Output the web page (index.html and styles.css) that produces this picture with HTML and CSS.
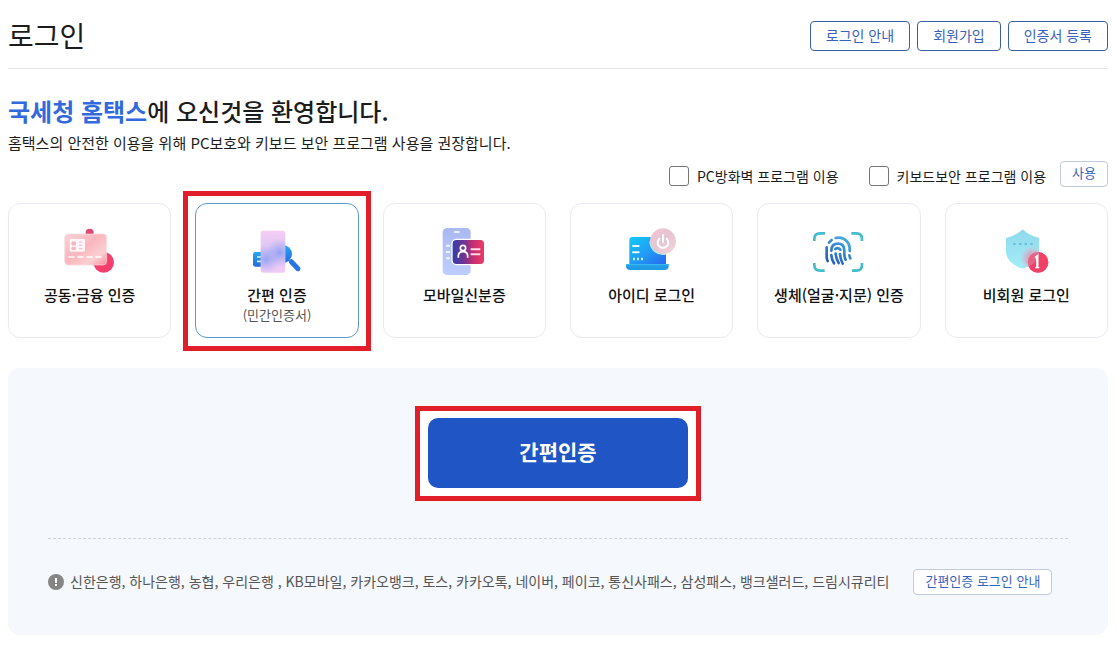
FILE: index.html
```html
<!doctype html>
<html lang="ko">
<head>
    <meta charset="utf-8">
    <meta content="width=device-width,initial-scale=1" name="viewport">
    <title>로그인</title>
    <link rel="stylesheet" href="styles.css">
</head>
<body>
<header class="top">
    <h1>로그인</h1>
    <div class="top-btns">
        <button type="button" class="btn">로그인 안내</button>
        <button type="button" class="btn">회원가입</button>
        <button type="button" class="btn">인증서 등록</button>
    </div>
</header>
<main>
    <h2><strong>국세청 홈택스</strong>에 오신것을 환영합니다.</h2>
    <p class="desc">홈택스의 안전한 이용을 위해 PC보호와 키보드 보안 프로그램 사용을 권장합니다.</p>

    <form class="security">
        <label for="firewall"><input type="checkbox" id="firewall">PC방화벽 프로그램 이용</label>
        <label for="keyboard"><input type="checkbox" id="keyboard">키보드보안 프로그램 이용</label>
        <button type="button" class="btn small">사용</button>
    </form>

    <div class="cards">
        <button type="button" class="card">
            <svg class="icon" viewBox="0 0 240 180" aria-hidden="true">
                <defs>
                    <linearGradient id="cardPink" x1="0" y1="0" x2="1" y2="1">
                        <stop offset="0" stop-color="#fbd3d8"/>
                        <stop offset=".45" stop-color="#f9b6bd"/>
                        <stop offset=".75" stop-color="#fbd0d3"/>
                        <stop offset="1" stop-color="#f58c9c"/>
                    </linearGradient>
                </defs>
                <circle cx="119" cy="38" r="12" fill="#dc4a74"/>
                <circle cx="161" cy="127" r="31" fill="#f43f6c"/>
                <rect x="44" y="42" width="126" height="93" rx="11" fill="url(#cardPink)" stroke="#fbdadd" stroke-width="2"/>
                <rect x="59" y="57" width="46" height="38" rx="4" fill="#fff" opacity=".85"/>
                <path d="M66 66h10v9H66zM66 82h10v6H66zM87 66h10M87 76h10M87 86h10" fill="#f7b6bf" stroke="#f7b6bf" stroke-width="3"/>
                <path d="M57 111h15M84 111h15M111 111h15M138 111h15" stroke="#fff" stroke-width="5" stroke-linecap="round"/>
            </svg>
            <span class="name">공동·금융 인증</span>
        </button>
        <button type="button" class="card on">
            <svg class="icon" viewBox="-9 0 240 180" aria-hidden="true">
                <defs>
                    <linearGradient id="blueLens" x1="0" y1="0" x2="0" y2="1">
                        <stop offset="0" stop-color="#26a9f1"/>
                        <stop offset="1" stop-color="#2569df"/>
                    </linearGradient>
                    <linearGradient id="phonePink" x1="0" y1="0" x2="0" y2="1">
                        <stop offset="0" stop-color="#f6cdf3"/>
                        <stop offset=".5" stop-color="#d8c4f5"/>
                        <stop offset="1" stop-color="#f1ccf4"/>
                    </linearGradient>
                    <radialGradient id="phoneGlow">
                        <stop offset="0" stop-color="#7c97f3" stop-opacity=".75"/>
                        <stop offset="1" stop-color="#9ba5f5" stop-opacity="0"/>
                    </radialGradient>
                    <clipPath id="phoneClip"><rect x="62" y="32" width="74" height="126" rx="8"/></clipPath>
                </defs>
                <rect x="39" y="96" width="48" height="44" rx="7" fill="url(#blueLens)"/>
                <path d="M51 111h15M51 124h15" stroke="#dff2ff" stroke-width="5"/>
                <circle cx="129" cy="102" r="27" fill="url(#blueLens)"/>
                <path d="M154 125l20 21" stroke="#2674e5" stroke-width="15" stroke-linecap="round"/>
                <rect x="62" y="32" width="74" height="126" rx="8" fill="url(#phonePink)"/>
                <g clip-path="url(#phoneClip)">
                    <circle cx="119" cy="98" r="42" fill="url(#phoneGlow)"/>
                    <circle cx="78" cy="118" r="42" fill="url(#phoneGlow)"/>
                </g>
            </svg>
            <span class="name">간편 인증</span>
            <span class="sub">(민간인증서)</span>
        </button>
        <button type="button" class="card">
            <svg class="icon" viewBox="-2 0 240 180" aria-hidden="true">
                <defs>
                    <linearGradient id="idCard" x1="0" y1="0" x2="1" y2="0">
                        <stop offset="0" stop-color="#2e3fae"/>
                        <stop offset=".4" stop-color="#77338f"/>
                        <stop offset=".65" stop-color="#c72f72"/>
                        <stop offset="1" stop-color="#ee3a64"/>
                    </linearGradient>
                    <linearGradient id="idPhone" x1="0" y1="0" x2="0" y2="1">
                        <stop offset="0" stop-color="#a9b9f1"/>
                        <stop offset="1" stop-color="#bfceff"/>
                    </linearGradient>
                </defs>
                <rect x="54" y="24" width="84" height="141" rx="13" fill="url(#idPhone)"/>
                <path d="M90 36h13" stroke="#fff" stroke-width="5" stroke-linecap="round"/>
                <path d="M64 77h12M64 96h12M64 115h12" stroke="#eef2ff" stroke-width="6"/>
                <rect x="82" y="58" width="98" height="76" rx="13" fill="url(#idCard)" stroke="#fff" stroke-width="4"/>
                <circle cx="115" cy="84" r="8" fill="none" stroke="#fff" stroke-width="5"/>
                <path d="M101 113v-5q0-13 14-13t14 13v5" fill="none" stroke="#fff" stroke-width="5"/>
                <path d="M138 88h29M138 103h29" stroke="#ffdce6" stroke-width="6"/>
            </svg>
            <span class="name">모바일신분증</span>
        </button>
        <button type="button" class="card">
            <svg class="icon" viewBox="7 0 240 180" aria-hidden="true">
                <defs>
                    <linearGradient id="laptop" x1="0" y1="0" x2="1" y2="1">
                        <stop offset="0" stop-color="#12caf7"/>
                        <stop offset=".55" stop-color="#2299f5"/>
                        <stop offset="1" stop-color="#2867ee"/>
                    </linearGradient>
                    <linearGradient id="power" x1="0" y1="0" x2="1" y2="1">
                        <stop offset="0" stop-color="#f6c6cf"/>
                        <stop offset=".5" stop-color="#e6c4d3"/>
                        <stop offset="1" stop-color="#fad8da"/>
                    </linearGradient>
                </defs>
                <path d="M59 132V60q0-9 9-9h92q9 0 9 9v72z" fill="url(#laptop)"/>
                <path d="M49 132h128v5q0 13-13 13H62q-13 0-13-13z" fill="#229be5"/>
                <path d="M49 134h128" stroke="#38b9f1" stroke-width="4"/>
                <path d="M70 78h17M70 97h17" stroke="#e8fbff" stroke-width="6" stroke-linecap="round"/>
                <path d="M70 117h6M82 117h6M94 117h6" stroke="#c5efff" stroke-width="7"/>
                <circle cx="160" cy="64" r="39" fill="url(#power)"/>
                <path d="M121 64a39 39 0 0 0 47 38" fill="none" stroke="#b9e6fb" stroke-width="4"/>
                <path d="M149 56a16 16 0 1 0 22 0M160 45v21" fill="none" stroke="#fff" stroke-width="6" stroke-linecap="round"/>
            </svg>
            <span class="name">아이디 로그인</span>
        </button>
        <button type="button" class="card">
            <svg class="icon" viewBox="3 0 240 180" aria-hidden="true">
                <defs>
                    <linearGradient id="finger" gradientUnits="userSpaceOnUse" x1="150" y1="48" x2="95" y2="135">
                        <stop offset="0" stop-color="#46b5e1"/>
                        <stop offset="1" stop-color="#2456b8"/>
                    </linearGradient>
                </defs>
                <g fill="none" stroke-width="8">
                    <path d="M49 63v-6q0-17 17-17h15M160 40h15q17 0 17 17v6M192 129v6q0 17-17 17h-13M80 152H66q-17 0-17-17v-6" stroke="#43bdcc"/>
                    <g stroke="url(#finger)" stroke-linecap="round">
                        <path d="M93 68l8-8M113 54q20-5 33 9 11 12 9 30"/>
                        <path d="M86 82v28q0 7 3 13"/>
                        <path d="M100 92q0-21 20-21 19 0 19 21v8q0 13 4 19"/>
                        <path d="M100 105q1 14 8 25"/>
                        <path d="M112 87q8-6 15 2M113 101q1 15 9 28"/>
                        <path d="M126 102q1 16 8 29M154 106l3 9"/>
                    </g>
                </g>
            </svg>
            <span class="name">생체(얼굴·지문) 인증</span>
        </button>
        <button type="button" class="card">
            <svg class="icon" viewBox="5 0 240 180" aria-hidden="true">
                <defs>
                    <linearGradient id="shield" x1="0" y1="0" x2="0" y2="1">
                        <stop offset="0" stop-color="#8dd8ec"/>
                        <stop offset="1" stop-color="#a5eefa"/>
                    </linearGradient>
                    <radialGradient id="shieldGlow">
                        <stop offset="0" stop-color="#e393ac"/>
                        <stop offset=".5" stop-color="#d4abc3" stop-opacity=".8"/>
                        <stop offset="1" stop-color="#b6d9e8" stop-opacity="0"/>
                    </radialGradient>
                    <clipPath id="shieldClip"><path d="M115 28q19 19 50 26v39q0 37-50 53-50-16-50-53V54q31-7 50-26z"/></clipPath>
                </defs>
                <circle cx="161" cy="127" r="31" fill="#ef4069"/>
                <g clip-path="url(#shieldClip)">
                    <path d="M60 20h110v135H60z" fill="url(#shield)"/>
                    <circle cx="144" cy="115" r="40" fill="url(#shieldGlow)"/>
                </g>
                <path d="M87 72h7M104 72h7M121 72h7M138 72h7" stroke="#69bfd9" stroke-width="6"/>
                <circle cx="161" cy="127" r="31" fill="#ef4069" opacity=".65"/>
                <path d="M153 114l6-5v34" fill="none" stroke="#fff" stroke-width="7"/>
                <path d="M153 143h12" stroke="#fff" stroke-width="4"/>
            </svg>
            <span class="name">비회원 로그인</span>
        </button>
    </div>

    <section class="panel">
        <div class="mark">
            <button type="button" class="login">간편인증</button>
        </div>
        <div class="info">
            <svg class="info-icon" viewBox="0 0 16 16" aria-hidden="true">
                <circle cx="8" cy="8" r="8" fill="#858585"/>
                <path d="M8 4v5M8 10v2" stroke="#fff" stroke-width="2"/>
            </svg>
            <p>신한은행, 하나은행, 농협, 우리은행 , KB모바일, 카카오뱅크, 토스, 카카오톡, 네이버, 페이코, 통신사패스, 삼성패스, 뱅크샐러드, 드림시큐리티</p>
            <button type="button" class="btn small">간편인증 로그인 안내</button>
        </div>
    </section>
</main>
</body>
</html>
```
FILE: styles.css
```css
* {
    box-sizing: border-box;
}

body {
    margin: 0;
    padding: 0 9px 10px 8px;
    font-family: "Noto Sans CJK KR", sans-serif;
    font-size: 14px;
    background: #ffffff;
    color: #1c1c1c;
}

h1, h2, p {
    margin: 0;
}

button {
    font-family: inherit;
    cursor: pointer;
}

.top {
    display: flex;
    justify-content: space-between;
    align-items: center;
    padding: 14px 0 12px;
    border-bottom: 1px solid #e4e7ec;
}

h1 {
    font-size: 28px;
    line-height: 42px;
    font-weight: 400;
}

.top-btns {
    display: flex;
    gap: 7px;
    padding-top: 2px;
}

.btn {
    height: 30px;
    padding: 0 15px 2px;
    border: 1px solid #3b5f9f;
    border-radius: 4px;
    background: #fff;
    color: #3662bd;
    font-size: 14px;
    line-height: 20px;
    white-space: nowrap;
}

.btn.small {
    height: 26px;
    padding: 0 11px 2px;
    border-color: #c0cad8;
    font-size: 13px;
    line-height: 18px;
}

h2 {
    margin-top: 24px;
    font-size: 24px;
    line-height: 36px;
    font-weight: 500;
}

h2 strong {
    color: #3269dc;
    font-weight: 700;
}

.desc {
    font-size: 15px;
    line-height: 28px;
}

.security {
    display: flex;
    justify-content: flex-end;
    align-items: center;
    margin-top: 4px;
}

.security label {
    display: flex;
    align-items: center;
    margin-right: 30px;
    padding-top: 3px;
    line-height: 20px;
}

.security label + label {
    margin-right: 14px;
}

.security input {
    appearance: none;
    width: 20px;
    height: 20px;
    margin: 0 8px 0 0;
    border: 1px solid #767676;
    border-radius: 3px;
    background: #fff;
}

.security input:checked {
    background: #1f55c4;
}

.cards {
    display: grid;
    grid-template-columns: repeat(6, 1fr);
    gap: 24px;
    margin-top: 16px;
}

.card {
    position: relative;
    display: flex;
    flex-direction: column;
    align-items: center;
    justify-content: flex-start;
    min-height: 135px;
    padding: 16px 0 12px;
    border: 1px solid #e8ebef;
    border-radius: 12px;
    background: #fff;
    color: #111;
}

.card.on {
    border-color: #5b97d2;
}

/* red highlight around the selected card */
.card.on::after {
    content: "";
    position: absolute;
    inset: -13px -13px -14px;
    border: 5px solid #e11f2b;
}

.icon {
    width: 80px;
    height: 60px;
}

.name {
    margin-top: 4px;
    font-size: 15px;
    line-height: 22px;
    font-weight: 500;
    white-space: nowrap;
}

.sub {
    color: #555;
    font-size: 13px;
    line-height: 18px;
}

.panel {
    margin-top: 30px;
    padding: 38px 40px 40px;
    border-radius: 12px;
    background: #f5f8fc;
}

.mark {
    width: fit-content;
    margin: 0 auto;
    padding: 7px 8px 8px;
    border: 5px solid #e11f2b;
    background: #fff;
}

.login {
    display: block;
    width: 260px;
    height: 70px;
    padding: 0 0 4px;
    border: 0;
    border-radius: 10px;
    background: #1f55c4;
    color: #fff;
    font-size: 21px;
    font-weight: 700;
}

.info {
    display: flex;
    align-items: center;
    margin-top: 37px;
    padding-top: 30px;
    border-top: 1px dashed #ccd3db;
    color: #555;
}

.info-icon {
    flex: none;
    width: 16px;
    height: 16px;
    margin-right: 6px;
}

.info p {
    margin-right: 24px;
    padding-bottom: 2px;
    line-height: 20px;
}
```
